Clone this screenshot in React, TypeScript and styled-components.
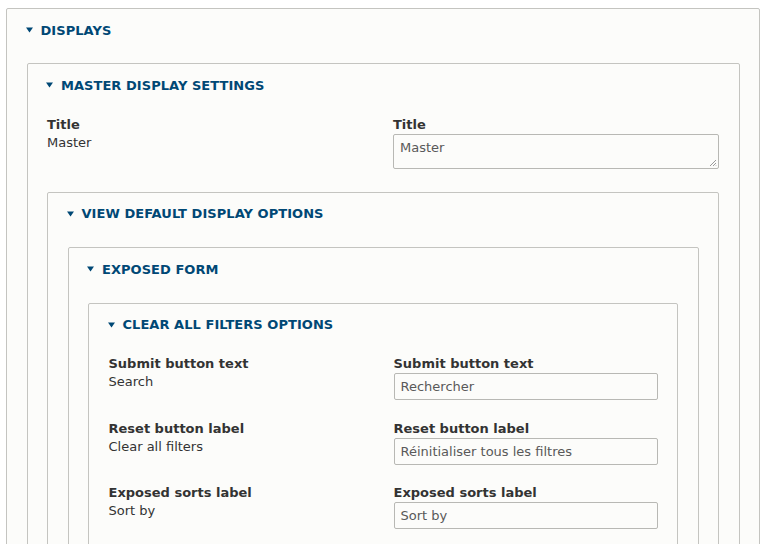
import * as React from 'react';
import styled, { createGlobalStyle } from 'styled-components';

const GlobalStyle = createGlobalStyle`
  html, body {
    margin: 0;
    background: #ffffff;
  }
  body {
    font-family: "DejaVu Sans", "Liberation Sans", sans-serif;
    font-size: 13px;
    color: #333333;
  }
`;

const Page = styled.div`
  padding: 8px 7px 0 6px;
`;

const Row = styled.div<{ $labelWidth: number }>`
  display: grid;
  grid-template-columns: ${(p) => p.$labelWidth}px 1fr;
  margin: 9.5px 0 10px;
`;

const Details = styled.div<{ $nested?: boolean }>`
  display: flex;
  flex-direction: column;
  border: 1px solid #c4c4c0;
  border-radius: 2px;
  background: #fcfcfa;
  padding: 0 19.5px 20px;
  margin-top: ${(p) => (p.$nested ? '12.4px' : '0')};

  ${Row} + & {
    margin-top: 13px;
  }
`;

const Summary = styled.div`
  display: flex;
  align-items: center;
  gap: 8px;
  height: 42px;
  margin-left: -1px;
  box-sizing: border-box;
  color: #004875;
  font-weight: bold;
  font-size: 13px;
  letter-spacing: 0.05px;
  text-transform: uppercase;
`;

const Arrow = () => (
  <svg width="7" height="6" viewBox="0 0 7 6">
    <path d="M0 0.5 H7 L3.5 5.5 Z" fill="#004875" />
  </svg>
);

const Cell = styled.div`
  display: flex;
  flex-direction: column;
`;

const Label = styled.div`
  font-weight: bold;
  line-height: 18px;
`;

const Value = styled.div`
  line-height: 18px;
`;

const Input = styled.div`
  box-sizing: border-box;
  height: 27px;
  border: 1px solid #b8b8b4;
  border-radius: 2px;
  background: #fcfcfa;
  color: #595959;
  padding: 0 6px;
  display: flex;
  align-items: center;
`;

const TextArea = styled(Input)`
  position: relative;
  height: 35px;
  align-items: flex-start;
  padding-top: 5px;
`;

const Grip = styled.svg`
  position: absolute;
  right: 1px;
  bottom: 1px;
`;

interface Field {
  label: string;
  source: string;
  translation: string;
  multiline?: boolean;
}

interface FieldRowProps {
  field: Field;
  labelWidth: number;
}

const FieldRow: React.FC<FieldRowProps> = ({ field, labelWidth }) => (
  <Row $labelWidth={labelWidth}>
    <Cell>
      <Label>{field.label}</Label>
      <Value>{field.source}</Value>
    </Cell>
    <Cell>
      <Label>{field.label}</Label>
      {field.multiline ? (
        <TextArea>
          {field.translation}
          <Grip width="8" height="8" viewBox="0 0 8 8">
            <path d="M7 1 L1 7 M7 4 L4 7 M7 6.5 L6.5 7" stroke="#9a9a9a" strokeWidth="1" />
          </Grip>
        </TextArea>
      ) : (
        <Input>{field.translation}</Input>
      )}
    </Cell>
  </Row>
);

interface SectionProps {
  title: string;
  nested?: boolean;
  children?: React.ReactNode;
}

const Section: React.FC<SectionProps> = ({ title, nested, children }) => (
  <Details $nested={nested}>
    <Summary>
      <Arrow />
      {title}
    </Summary>
    {children}
  </Details>
);

const clearFilterFields: Field[] = [
  { label: 'Submit button text', source: 'Search', translation: 'Rechercher' },
  { label: 'Reset button label', source: 'Clear all filters', translation: 'Réinitialiser tous les filtres' },
  { label: 'Exposed sorts label', source: 'Sort by', translation: 'Sort by' },
];

const App: React.FC = () => (
  <Page>
    <GlobalStyle />
    <Section title="Displays">
      <Section title="Master display settings" nested>
        <FieldRow
          labelWidth={346}
          field={{ label: 'Title', source: 'Master', translation: 'Master', multiline: true }}
        />
        <Section title="View default display options" nested>
          <Section title="Exposed form" nested>
            <Section title="Clear all filters options" nested>
              {clearFilterFields.map((f) => (
                <FieldRow key={f.label} field={f} labelWidth={285} />
              ))}
            </Section>
          </Section>
        </Section>
      </Section>
    </Section>
  </Page>
);

export default App;
